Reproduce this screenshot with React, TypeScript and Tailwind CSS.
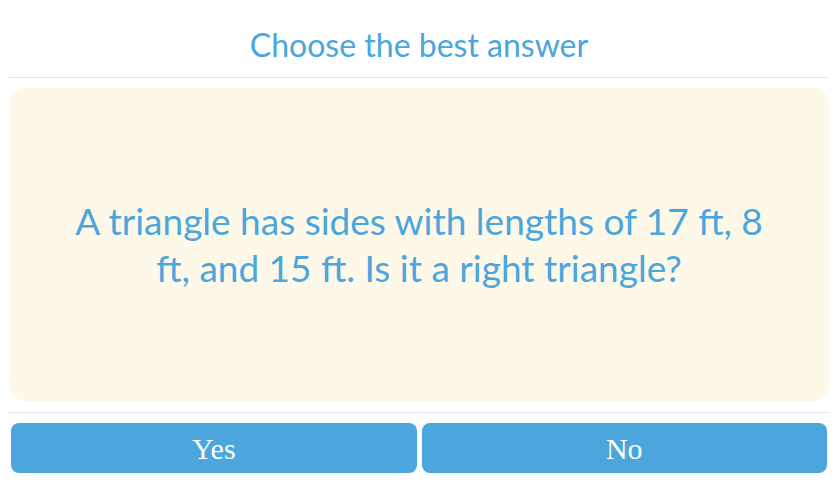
export default function App() {
  return (
    <div className="w-[840px] h-[501px] bg-white flex flex-col" style={{ fontFamily: "Lato, 'Open Sans', sans-serif" }}>
      <div className="h-[77px] flex items-center justify-center text-[#4aa6dc] text-[32px] pt-[12px] ml-[9px] mr-[11px]">
        Choose the best answer
      </div>
      <div className="ml-[9px] mr-[11px] h-px bg-[#e2e4e6]" />
      <div className="ml-[9px] mr-[11px] mt-[10px] h-[313px] rounded-[16px] bg-[#fef8e8] flex items-center justify-center">
        <p className="text-center text-[#4aa6dc] text-[37px] leading-[47px] max-w-[715px] pb-[2px]">
          A triangle has sides with lengths of 17 ft, 8 ft, and 15 ft. Is it a right triangle?
        </p>
      </div>
      <div className="ml-[9px] mr-[11px] mt-[11px] h-px bg-[#e2e4e6]" />
      <div className="ml-[11px] mr-[13px] mt-[10px] flex gap-[5px]">
        <button className="flex-1 h-[50px] rounded-[8px] bg-[#4aa6dc] text-white text-[30px]" style={{ fontFamily: "'Liberation Serif', serif" }}>Yes</button>
        <button className="flex-1 h-[50px] rounded-[8px] bg-[#4aa6dc] text-white text-[30px]" style={{ fontFamily: "'Liberation Serif', serif" }}>No</button>
      </div>
    </div>
  );
}
